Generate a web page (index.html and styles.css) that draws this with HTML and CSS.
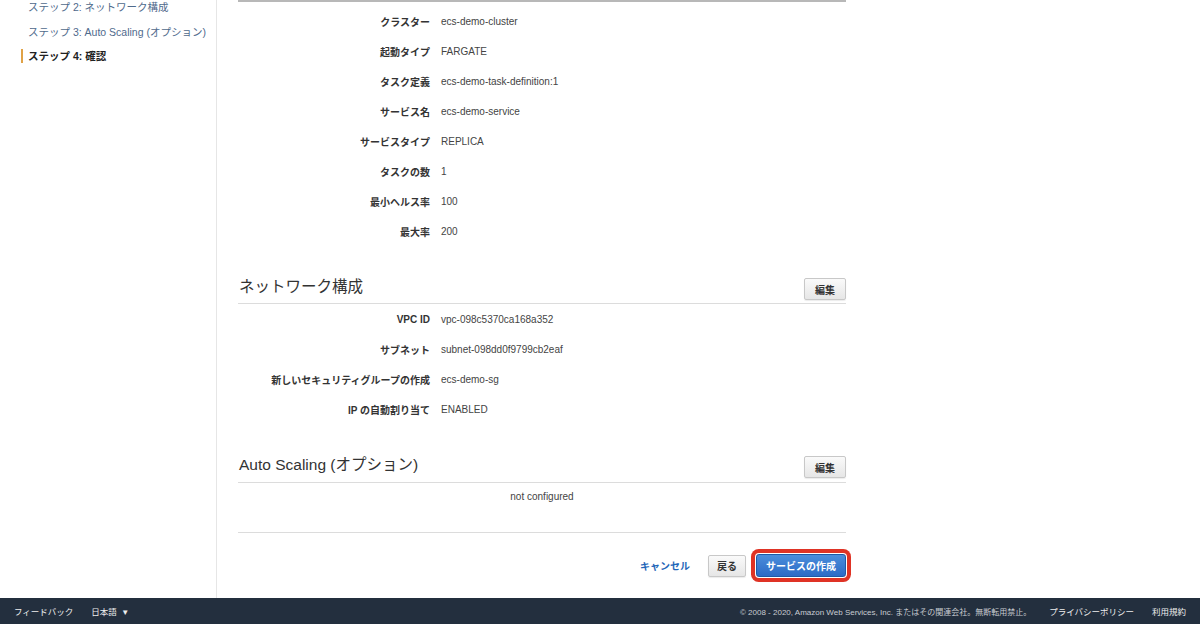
FILE: index.html
```html
<!DOCTYPE html>
<html lang="ja">
<head>
<meta charset="utf-8">
<title>ECS サービスの作成 - 確認</title>
<link rel="stylesheet" href="styles.css">
</head>
<body>
<div class="page">
  <div class="main">
    <aside class="sidebar">
      <ul class="steps">
        <li class="step">ステップ 2: ネットワーク構成</li>
        <li class="step">ステップ 3: Auto Scaling (オプション)</li>
        <li class="step current">ステップ 4: 確認</li>
      </ul>
    </aside>
    <section class="content">
      <div class="details first">
        <div class="row"><span class="label">クラスター</span><span class="value">ecs-demo-cluster</span></div>
        <div class="row"><span class="label">起動タイプ</span><span class="value">FARGATE</span></div>
        <div class="row"><span class="label">タスク定義</span><span class="value">ecs-demo-task-definition:1</span></div>
        <div class="row"><span class="label">サービス名</span><span class="value">ecs-demo-service</span></div>
        <div class="row"><span class="label">サービスタイプ</span><span class="value">REPLICA</span></div>
        <div class="row"><span class="label">タスクの数</span><span class="value">1</span></div>
        <div class="row"><span class="label">最小ヘルス率</span><span class="value">100</span></div>
        <div class="row"><span class="label">最大率</span><span class="value">200</span></div>
      </div>

      <div class="section-head net">
        <h2 class="section-title">ネットワーク構成</h2>
        <button class="btn">編集</button>
      </div>
      <div class="details">
        <div class="row"><span class="label">VPC ID</span><span class="value">vpc-098c5370ca168a352</span></div>
        <div class="row"><span class="label">サブネット</span><span class="value">subnet-098dd0f9799cb2eaf</span></div>
        <div class="row"><span class="label">新しいセキュリティグループの作成</span><span class="value">ecs-demo-sg</span></div>
        <div class="row"><span class="label">IP の自動割り当て</span><span class="value">ENABLED</span></div>
      </div>

      <div class="section-head auto">
        <h2 class="section-title">Auto Scaling (オプション)</h2>
        <button class="btn">編集</button>
      </div>
      <div class="empty">not configured</div>

      <div class="actions">
        <a class="link-cancel">キャンセル</a>
        <button class="btn back">戻る</button>
        <button class="btn primary">サービスの作成</button>
      </div>
    </section>
  </div>
  <footer class="footer">
    <div class="footer-left">
      <span>フィードバック</span>
      <span class="lang">日本語 <span class="caret">▼</span></span>
    </div>
    <div class="footer-right">
      <span class="copy">© 2008 - 2020, Amazon Web Services, Inc. またはその関連会社。無断転用禁止。</span>
      <span>プライバシーポリシー</span>
      <span>利用規約</span>
    </div>
  </footer>
</div>
</body>
</html>
```
FILE: styles.css
```css
* { box-sizing: border-box; }
html, body { margin: 0; padding: 0; }
body {
  font-family: "Liberation Sans", "Noto Sans CJK JP", sans-serif;
  color: #333;
  background: #fff;
  width: 1200px;
  height: 624px;
  overflow: hidden;
}
.page { display: flex; flex-direction: column; height: 624px; }
.main { display: flex; height: 598px; }

.sidebar {
  width: 217px;
  flex: none;
  border-right: 1px solid #e6e6e6;
  overflow: hidden;
}
.steps { list-style: none; margin: -5px 0 0 0; padding: 0 0 0 21px; }
.step {
  font-size: 10.5px;
  color: #4f6a8c;
  line-height: 14px;
  padding: 5px 0 5px 5px;
  margin-bottom: 0.5px;
  border-left: 2px solid transparent;
}
.step.current {
  color: #222;
  font-weight: bold;
  border-left-color: #e0a246;
  padding-top: 0;
  padding-bottom: 0;
  margin-top: 5px;
}

.content {
  width: 629px;
  padding-left: 21px;
  flex: none;
}
.details.first {
  border-top: 2px solid #b8b8b8;
  padding-top: 4px;
}
.row {
  display: flex;
  align-items: center;
  height: 30px;
  font-size: 10px;
}
.label {
  width: 192px;
  text-align: right;
  font-weight: bold;
  color: #333;
  flex: none;
}
.value { margin-left: 11px; color: #444; }

.section-head {
  display: flex;
  align-items: flex-start;
  justify-content: space-between;
  height: 26px;
  padding-bottom: 2px;
  border-bottom: 1px solid #dcdcdc;
}
.section-head.net { margin-top: 32px; }
.section-head.auto { margin-top: 32px; height: 27px; }
.section-title {
  margin: 0 0 0 1px;
  font-size: 15.5px;
  line-height: 18px;
  font-weight: normal;
  color: #333;
}
.btn {
  font-family: inherit;
  font-size: 10px;
  font-weight: bold;
  color: #333;
  height: 22px;
  padding: 0 10px;
  border: 1px solid #c8c8c8;
  border-radius: 2px;
  background: linear-gradient(#fafafa, #e6e6e6);
  box-shadow: 0 1px 1px rgba(0,0,0,0.08);
}

.empty {
  height: 50px;
  padding-top: 8px;
  text-align: center;
  font-size: 10px;
  color: #444;
  border-bottom: 1px solid #dcdcdc;
}

.actions {
  display: flex;
  justify-content: flex-end;
  align-items: center;
  margin-top: 21px;
}
.link-cancel {
  font-size: 10px;
  font-weight: bold;
  color: #1f66b8;
  margin-right: 18px;
}
.btn.back { height: 22px; padding: 0 8px; margin-right: 10px; }
.btn.primary {
  height: 23px;
  width: 90px;
  padding: 0;
  color: #fff;
  border: 1px solid #1e5aa6;
  background: linear-gradient(#4b8ddb, #2c6bc6);
  border-radius: 3px;
  box-shadow: 0 0 0 1px #fff, 0 0 0 5px #df3325;
}

.footer {
  height: 26px;
  background: #232f3e;
  color: #eee;
  font-size: 8.5px;
  display: flex;
  align-items: center;
  justify-content: space-between;
  padding: 0 14px;
}
.footer-left { display: flex; gap: 18px; }
.caret { font-size: 8px; margin-left: 2px; }
.footer-right { display: flex; gap: 18px; align-items: center; }
.copy { color: #c8ccd1; font-size: 8px; }
```
